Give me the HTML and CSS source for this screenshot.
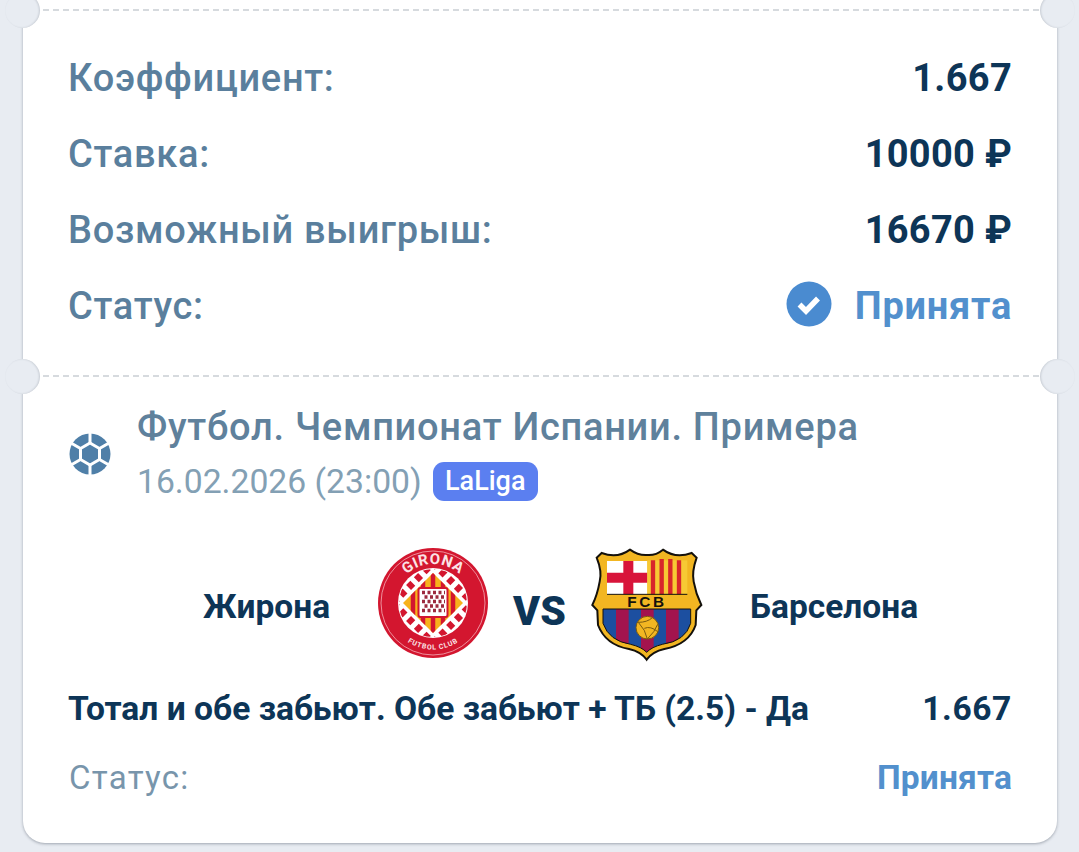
FILE: index.html
```html
<!DOCTYPE html>
<html lang="ru">
<head>
<meta charset="utf-8">
<title>Ставка</title>
<link rel="stylesheet" href="styles.css">
</head>
<body>
<main class="ticket">
  <div class="tear"><i class="notch notch-l"></i><i class="notch notch-r"></i></div>
  <section class="summary">
    <div class="row"><span class="label">Коэффициент:</span><span class="value">1.667</span></div>
    <div class="row"><span class="label">Ставка:</span><span class="value">10000 ₽</span></div>
    <div class="row"><span class="label">Возможный выигрыш:</span><span class="value">16670 ₽</span></div>
    <div class="row">
      <span class="label">Статус:</span>
      <span class="status">
        <svg class="check" viewBox="0 0 46 46"><circle cx="23" cy="23" r="22.5" fill="#4a8bd0"/><path d="M13.500 23.500l6.500 6.500 12-12.500" fill="none" stroke="#fff" stroke-width="5.500"/></svg>
        <span class="status-text">Принята</span>
      </span>
    </div>
  </section>
  <div class="tear"><i class="notch notch-l"></i><i class="notch notch-r"></i></div>
  <section class="event">
    <header class="event-head">
      <svg class="ball" viewBox="0 0 42 42">
        <circle cx="21" cy="21" r="20.500" fill="#4f7fa8"/>
        <g stroke="#fff" stroke-width="3">
          <path d="M21 10V0M30.500 15.500L40 10M30.500 26.500L40 32M21 32V42M11.500 26.500L2 32M11.500 15.500L2 10"/>
          <path d="M21 10L30.500 15.500V26.500L21 32L11.500 26.500V15.500Z" fill="#4f7fa8"/>
        </g>
      </svg>
      <div class="event-info">
        <div class="event-title">Футбол. Чемпионат Испании. Примера</div>
        <div class="event-meta"><span class="event-date">16.02.2026 (23:00)</span><span class="badge">LaLiga</span></div>
      </div>
    </header>
    <div class="match">
      <span class="team team-home">Жирона</span>
      <svg class="logo logo-girona" viewBox="0 0 112 112">
        <defs>
          <path id="arcTop" d="M17 56a39 39 0 0 1 78 0"/>
          <path id="arcBottom" d="M9.500 56a46.500 46.500 0 0 0 93 0"/>
          <clipPath id="clipInner"><circle cx="56" cy="56" r="34"/></clipPath>
          <clipPath id="clipDiamond"><path d="M56 26L86 56L56 86L26 56Z"/></clipPath>
        </defs>
        <circle cx="56" cy="56" r="55" fill="#d3162f"/>
        <circle cx="56" cy="56" r="52" fill="none" stroke="#ee8f9c" stroke-width="1"/>
        <text class="girona-top"><textPath href="#arcTop" startOffset="50%" text-anchor="middle">GIRONA</textPath></text>
        <text class="girona-bottom"><textPath href="#arcBottom" startOffset="50%" text-anchor="middle">FUTBOL CLUB</textPath></text>
        <circle cx="56" cy="56" r="35" fill="#fff"/>
        <g clip-path="url(#clipInner)">
          <path d="M56 16L96 56M16 56L56 16M16 56L56 96M56 96L96 56" stroke="#d3162f" stroke-width="7" stroke-dasharray="6 5"/>
        </g>
        <path d="M56 26L86 56L56 86L26 56Z" fill="#f7b21b"/>
        <g clip-path="url(#clipDiamond)"><path d="M36 20V92M46 20V92M56 20V92M66 20V92M76 20V92" stroke="#d3162f" stroke-width="4.500"/></g>
        <rect x="41.500" y="41" width="29" height="29" rx="2" fill="#fff" stroke="#d3162f" stroke-width="2"/>
        <path d="M45 45.500H68M47.500 50H68M45 54.500H68M47.500 59H68M45 63.500H68" stroke="#9c2a3e" stroke-width="3.500" stroke-dasharray="3 2.500"/>
      </svg>
      <span class="vs">VS</span>
      <svg class="logo logo-fcb" viewBox="0 0 405 405">
        <defs>
          <clipPath id="clipLower"><path d="M72 222H335V265Q320 318 250 328Q218 336 203 352Q188 336 155 328Q90 318 72 265Z"/></clipPath>
        </defs>
        <path d="M205 60Q178 62 153 44Q115 72 68 54L53 68Q70 110 62 140Q55 180 40 210L55 226L57 270Q80 330 150 342Q186 350 203 374Q220 350 256 342Q330 328 350 270L352 226L367 210Q350 175 344 140Q338 110 353 68L338 54Q290 72 252 44Q230 62 205 60Z" fill="#f2b622" stroke="#14110c" stroke-width="6"/>
        <rect x="84" y="78" width="121" height="100" fill="#fff"/>
        <path d="M133 78H163V113H205V143H163V178H133V143H84V113H133Z" fill="#d8143a"/>
        <rect x="205" y="76" width="120" height="102" fill="#f7c934"/>
        <path d="M222 76V178M248 72V178M274 72V178M300 76V178" stroke="#d8262b" stroke-width="13"/>
        <path d="M84 178H325" stroke="#14110c" stroke-width="3"/>
        <text class="fcb-text" x="204" y="215" text-anchor="middle">FCB</text>
        <g clip-path="url(#clipLower)">
          <rect x="70" y="222" width="270" height="135" fill="#1c4fa0"/>
          <path d="M130 222V350M205 222V350M280 222V350" stroke="#a3144e" stroke-width="38"/>
        </g>
        <path d="M72 222H335V265Q320 318 250 328Q218 336 203 352Q188 336 155 328Q90 318 72 265Z" fill="none" stroke="#14110c" stroke-width="3"/>
        <circle cx="205" cy="278" r="34" fill="#f2b622" stroke="#7a5a10" stroke-width="3"/>
        <path d="M178 262Q205 262 220 248M205 312Q200 285 178 262M205 312Q228 290 236 268M196 280Q215 272 236 290" fill="none" stroke="#7a5a10" stroke-width="3"/>
      </svg>
      <span class="team team-away">Барселона</span>
    </div>
    <div class="market"><span>Тотал и обе забьют. Обе забьют + ТБ (2.5) - Да</span><span class="market-odds">1.667</span></div>
    <div class="result"><span class="result-label">Статус:</span><span class="result-value">Принята</span></div>
  </section>
</main>
</body>
</html>
```
FILE: styles.css
```css
* { box-sizing: border-box; }
html, body { margin: 0; height: 100%; }
body {
  background: #e8ecf2;
  font-family: Roboto, "Liberation Sans", sans-serif;
  overflow: hidden;
}
.ticket {
  margin: 0 22px 0 23px;
  height: 843px;
  padding-top: 9px;
  background: #fff;
  border-radius: 0 0 22px 22px;
  box-shadow: 0 1px 3px rgba(70, 80, 95, .45);
  position: relative;
}
.tear {
  position: relative;
  height: 2px;
  background: repeating-linear-gradient(90deg, #d6dade 0 6px, transparent 6px 10px);
}
.notch {
  position: absolute;
  top: -16.500px;
  width: 35px;
  height: 35px;
  border-radius: 50%;
  background: #e8ecf2;
}
.notch-l { left: -18px; box-shadow: inset -1px 0 2px rgba(70, 80, 95, .2); }
.notch-r { right: -18px; box-shadow: inset 1px 0 2px rgba(70, 80, 95, .2); }

.summary {
  height: 364px;
  padding: 29px 45px 0 46px;
  display: flex;
  flex-direction: column;
}
.row {
  height: 76px;
  display: flex;
  align-items: center;
  justify-content: space-between;
}
.label { font-size: 38px; font-weight: 500; letter-spacing: .7px; color: #5a7f9d; margin-left: -1px; }
.value { font-size: 38px; font-weight: 700; letter-spacing: .3px; color: #0d3557; }
.status { display: flex; align-items: center; gap: 23px; }
.check { width: 46px; height: 46px; margin-top: -4px; }
.status-text { font-size: 38px; font-weight: 700; letter-spacing: .75px; color: #5290cd; }

.event { padding: 0 45px 0 46px; }
.event-head { display: flex; align-items: center; gap: 26px; padding-top: 23px; }
.ball { width: 42px; height: 42px; flex: none; }
.event-title { font-size: 38px; line-height: 54px; font-weight: 500; letter-spacing: .72px; color: #5f819c; }
.event-meta { display: flex; align-items: center; gap: 12px; height: 54px; }
.event-date { font-size: 33.700px; color: #83a0b4; }
.badge {
  background: #5b7ff0;
  color: #fff;
  font-size: 27px;
  font-weight: 500;
  height: 39px;
  width: 105px;
  margin-left: -1px;
  border-radius: 11px;
  display: flex;
  align-items: center;
  justify-content: center;
}
.match {
  display: flex;
  align-items: center;
  height: 120px;
  margin-top: 35px;
  padding-left: 134px;
}
.team { font-size: 33.500px; font-weight: 700; color: #0d3557; margin-top: 6px; }
.team-home { width: 175px; }
.logo-girona { width: 112px; height: 112px; margin-left: -1px; }
.vs { width: 101px; text-align: center; font-size: 41px; font-weight: 900; color: #0d3557; margin-top: 16px; }
.logo-fcb { width: 135px; height: 135px; margin: -2px -12px 0 -11px; }
.team-away { margin-left: 48px; }
.market {
  display: flex;
  justify-content: space-between;
  font-size: 33.600px;
  font-weight: 700;
  color: #0d3557;
  margin-top: 26px;
  margin-left: -1px;
}
.market-odds { letter-spacing: .6px; }
.result {
  display: flex;
  justify-content: space-between;
  align-items: center;
  margin-top: 30px;
  font-size: 33.500px;
}
.result-label { color: #7895ab; font-size: 33px; letter-spacing: 1.300px; }
.result-value { color: #5290cd; font-weight: 700; letter-spacing: .15px; }

.girona-top { font: 700 15px Roboto, sans-serif; fill: #fbe3e6; letter-spacing: .5px; }
.girona-bottom { font: 700 7px Roboto, sans-serif; fill: #fbe3e6; letter-spacing: .8px; }
.fcb-text { font: 700 46px "Liberation Sans", sans-serif; fill: #14110c; letter-spacing: 8px; }
```
